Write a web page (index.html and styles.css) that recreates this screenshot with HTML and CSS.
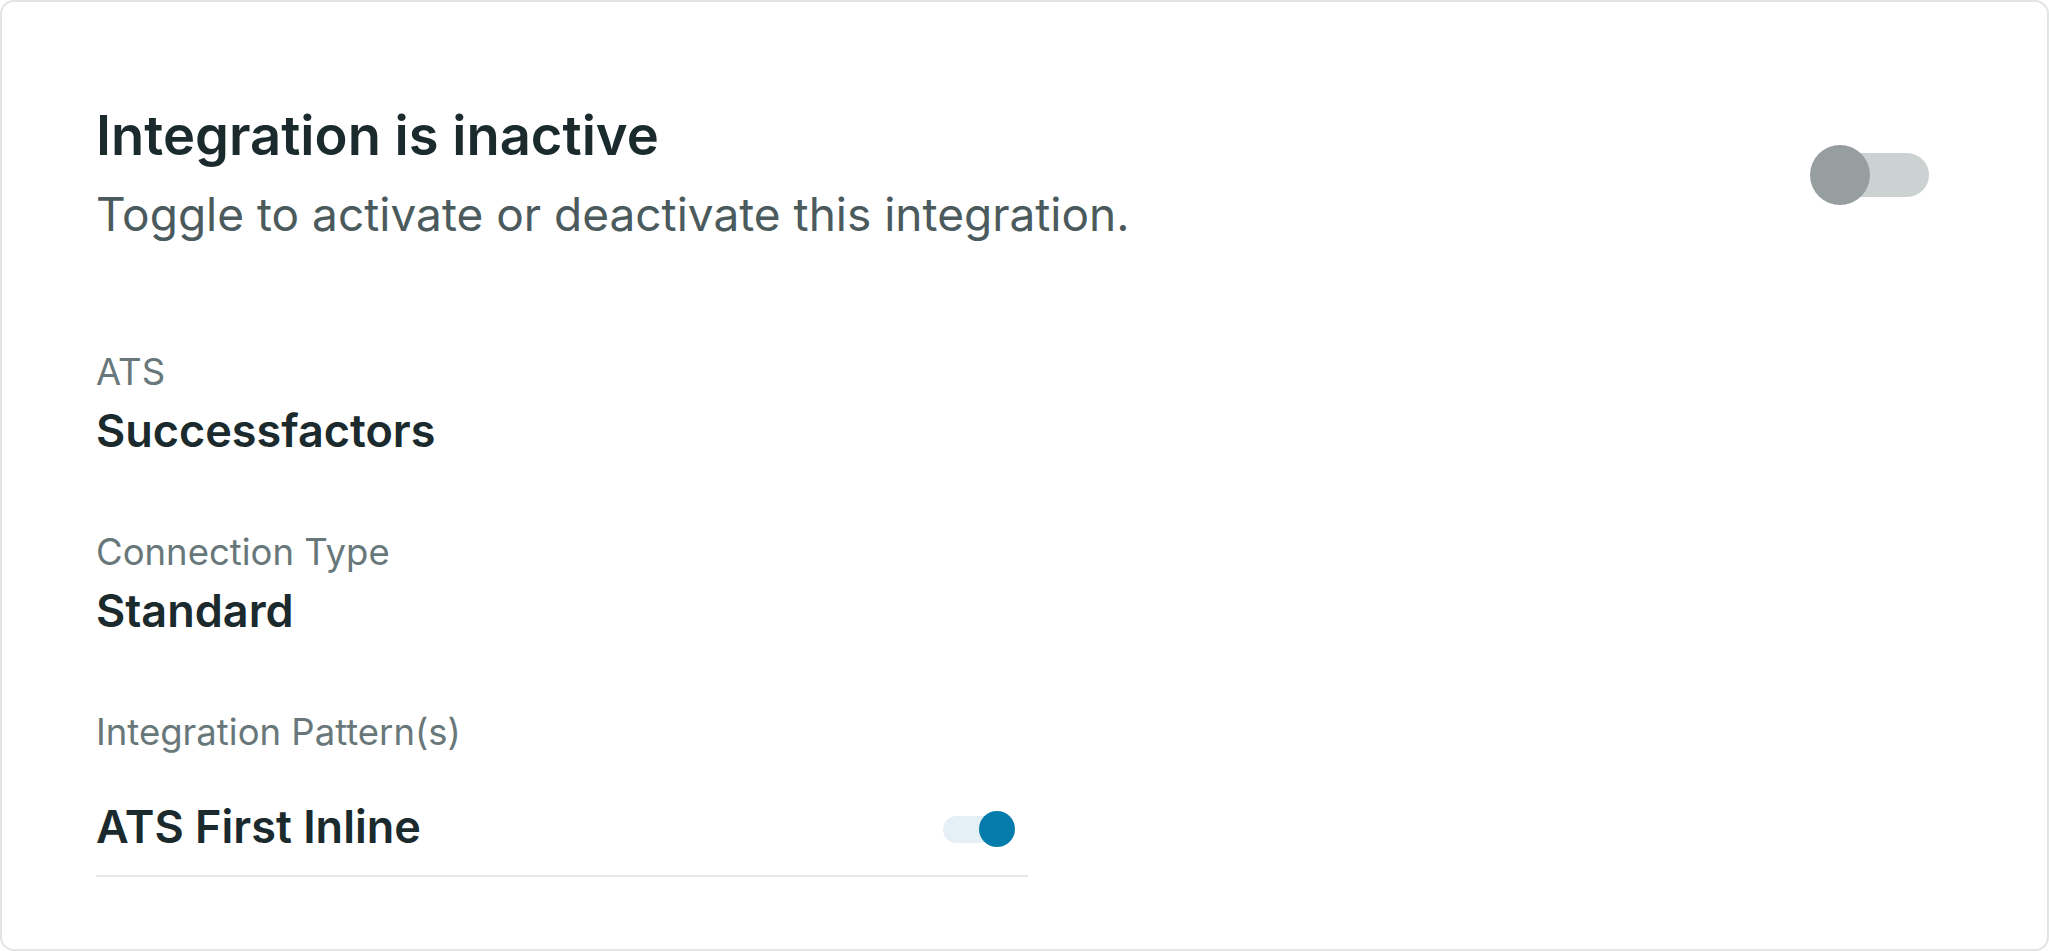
FILE: index.html
```html
<!DOCTYPE html>
<html lang="en">
<head>
<meta charset="utf-8">
<title>Integration</title>
<link rel="stylesheet" href="styles.css">
</head>
<body>
<section class="card">
  <header class="card-header">
    <div class="header-text">
      <h1 class="title">Integration is inactive</h1>
      <p class="subtitle">Toggle to activate or deactivate this integration.</p>
    </div>
    <div class="switch switch-lg switch-off" role="switch" aria-checked="false">
      <span class="switch-track"></span>
      <span class="switch-knob"></span>
    </div>
  </header>

  <dl class="details">
    <div class="field">
      <dt class="field-label">ATS</dt>
      <dd class="field-value">Successfactors</dd>
    </div>
    <div class="field">
      <dt class="field-label">Connection Type</dt>
      <dd class="field-value">Standard</dd>
    </div>
    <div class="field">
      <dt class="field-label">Integration Pattern(s)</dt>
      <dd class="pattern-list">
        <div class="pattern-row">
          <span class="pattern-name">ATS First Inline</span>
          <div class="switch switch-sm switch-on" role="switch" aria-checked="true">
            <span class="switch-track"></span>
            <span class="switch-knob"></span>
          </div>
        </div>
      </dd>
    </div>
  </dl>
</section>
</body>
</html>
```

FILE: styles.css
```css
* { box-sizing: border-box; }

html, body {
  margin: 0;
  padding: 0;
  background: #ffffff;
}

body {
  font-family: "Inter", "Noto Sans", "Liberation Sans", sans-serif;
  color: #1a2a2d;
}

.card {
  height: 100vh;
  border: 2px solid #e3e5e5;
  border-radius: 14px;
  padding: 99px 94px 0 94px;
  background: #ffffff;
}

.card-header {
  display: flex;
  justify-content: space-between;
  align-items: center;
}

.title {
  margin: 0;
  font-size: 54.3px;
  line-height: 68px;
  font-weight: 600;
  color: #1a2a2d;
}

.subtitle {
  margin: 13px 0 0 0;
  font-size: 46px;
  line-height: 64px;
  font-weight: 400;
  color: #4b5a5c;
}

.details {
  margin: 102px 0 0 0;
  display: flex;
  flex-direction: column;
  gap: 65px;
}

.field { margin: 0; }

.field-label {
  margin: 0;
  font-size: 36.5px;
  line-height: 49px;
  font-weight: 400;
  color: #68777a;
}

.field-value {
  margin: 2px 0 0 0;
  font-size: 45px;
  line-height: 64px;
  font-weight: 600;
  color: #1a2a2d;
}

.pattern-list {
  margin: 38px 0 0 0;
  width: 932px;
}

.pattern-row {
  display: flex;
  justify-content: space-between;
  align-items: center;
  padding: 0 13px 16px 0;
  border-bottom: 2px solid #e6e7e7;
}

.pattern-name {
  font-size: 45px;
  line-height: 64px;
  font-weight: 600;
  color: #1a2a2d;
}

/* switches */
.switch {
  position: relative;
  flex: none;
}

.switch-track {
  position: absolute;
  border-radius: 999px;
}

.switch-knob {
  position: absolute;
  border-radius: 50%;
}

.switch-lg {
  width: 119px;
  height: 60px;
  margin: 2px 24px 0 0;
}

.switch-lg .switch-track {
  left: 3px;
  right: 0;
  top: 8px;
  height: 44px;
}

.switch-lg .switch-knob {
  top: 0;
  width: 60px;
  height: 60px;
}

.switch-sm {
  width: 72px;
  height: 36px;
  margin-top: 4px;
}

.switch-sm .switch-track {
  left: 0;
  right: 3px;
  top: 5px;
  height: 27px;
}

.switch-sm .switch-knob {
  top: 0;
  width: 36px;
  height: 36px;
}

.switch-off .switch-track { background: #ccd1d2; }
.switch-off .switch-knob { left: 0; background: #969e9f; }

.switch-on .switch-track { background: #e5f0f6; }
.switch-on .switch-knob { right: 0; background: #037cab; }
```
